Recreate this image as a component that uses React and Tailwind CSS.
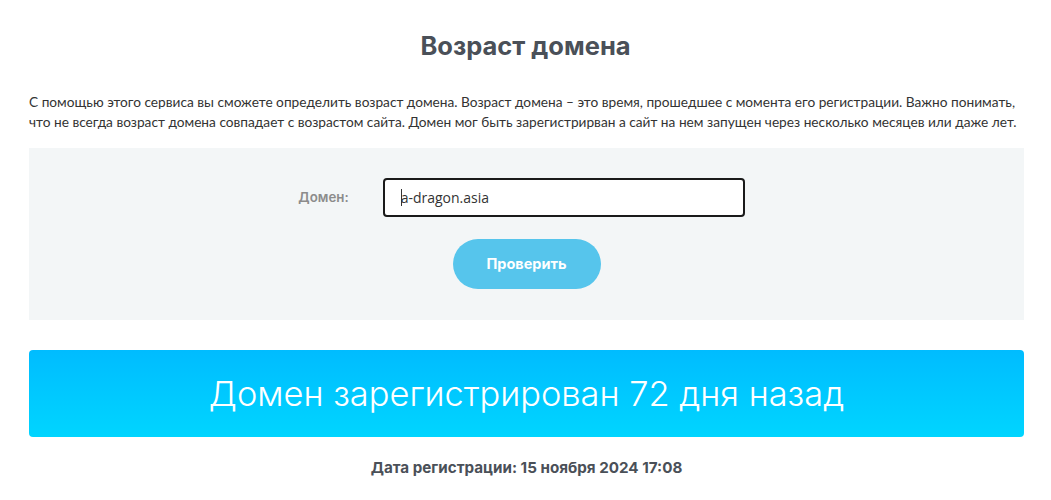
export default function App() {
  return (
    <div className="w-full bg-white pt-[31px] font-[Lato,sans-serif]">
      <h1 className="text-center font-[Inter,sans-serif] text-[25.5px] font-bold leading-[30px] text-[#4a5058]">
        Возраст домена
      </h1>
      <div className="ml-[29px] mt-[31px] w-[995px]">
        <p className="text-[13.7px] leading-[20px] text-[#333]">
          С помощью этого сервиса вы сможете определить возраст домена. Возраст домена – это время, прошедшее с момента его регистрации. Важно понимать, что не всегда возраст домена совпадает с возрастом сайта. Домен мог быть зарегистрирван а сайт на нем запущен через несколько месяцев или даже лет.
        </p>
        <div className="mt-[16px] flex h-[172px] flex-col items-center bg-[#f3f6f7] pt-[30px]">
          <div className="mr-[10px] flex items-center">
            <span className="mr-[34px] font-[Inter,sans-serif] text-[13.3px] font-semibold text-[#8c8c8c]">Домен:</span>
            <div className="flex h-[39px] w-[362px] items-center rounded-[4px] border-2 border-[#1a1a1a] bg-white pl-[16px] font-['Open_Sans',sans-serif] text-[14px] text-[#333]">
              <span className="mr-[-1px] inline-block h-[17px] w-px bg-[#333]"></span>a-dragon.asia
            </div>
          </div>
          <button className="mt-[22px] h-[50px] w-[148px] rounded-full bg-[#56c5ec] font-[Inter,sans-serif] text-[14.5px] font-bold text-white">
            Проверить
          </button>
        </div>
        <div className="mt-[30px] flex h-[87px] items-center justify-center rounded-[4px] bg-gradient-to-b from-[#00bcff] to-[#00d5ff]">
          <span className="font-[Inter,sans-serif] text-[34.4px] font-light text-white">
            Домен зарегистрирован 72 дня назад
          </span>
        </div>
        <p className="mt-[20px] text-center font-[Inter,sans-serif] text-[15.2px] font-bold text-[#4a5058]">
          Дата регистрации: 15 ноября 2024 17:08
        </p>
      </div>
    </div>
  );
}
